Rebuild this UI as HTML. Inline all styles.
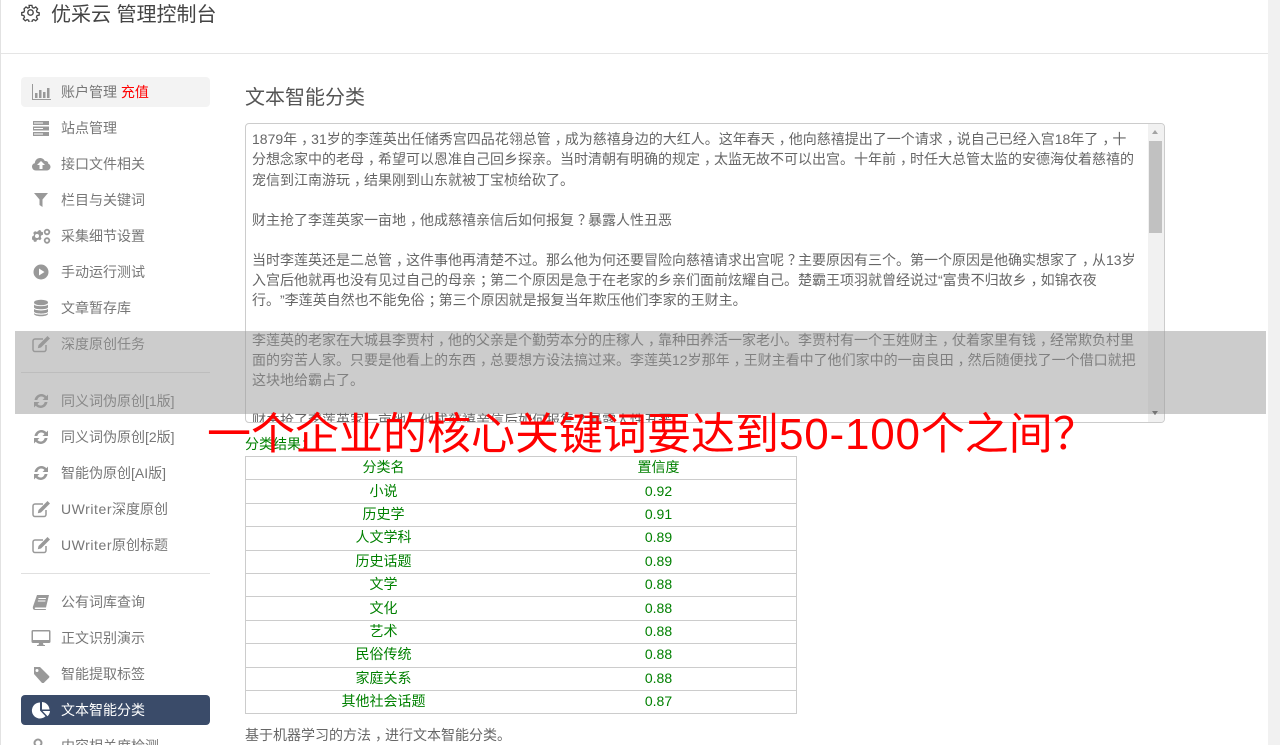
<!DOCTYPE html>
<html lang="zh"><head><meta charset="utf-8"><title>文本智能分类</title>
<style>
html,body{margin:0;padding:0;width:1280px;height:745px;overflow:hidden;background:#fff}
body{position:relative;font-family:"Liberation Sans","Noto Sans CJK SC",sans-serif;font-size:14px;color:#676a6c;text-spacing-trim:space-all}
.a{position:absolute;white-space:nowrap}
.item{position:absolute;left:21px;width:189px;height:30px;border-radius:4px;line-height:30px;color:#777}
.item span.t{position:absolute;left:40px;top:0;white-space:nowrap}
.item svg{position:absolute;left:10px;top:6px;width:20px;height:18px;fill:#999}
.hr{position:absolute;left:21px;width:189px;height:1px;background:#e0e0e0}
.ln{position:absolute;left:6px;white-space:nowrap;line-height:20px;color:#666}
.ln i,.p i{font-style:normal;position:relative;left:4px}
.l{letter-spacing:.55px}
td{border-top:1px solid #ccc;border-bottom:1px solid #ccc;padding:0 0 2px;text-align:center;color:green;height:20.4px;line-height:20px}
table{position:absolute;left:245px;top:456px;width:552px;border-collapse:collapse;table-layout:fixed;border-left:1px solid #ccc;border-right:1px solid #ccc}
</style></head><body>
<div class="a" style="left:0;top:0;width:1px;height:745px;background:#e2e2e2"></div>
<div class="a" style="left:1268px;top:0;width:12px;height:745px;background:#f1f1f1"></div>
<div class="a" style="left:1px;top:53px;width:1267px;height:1px;background:#e5e5e5"></div>
<svg class="a" style="left:21px;top:3px" width="19" height="19" viewBox="0 0 24 24" fill="none" stroke="#444" stroke-width="1.8"><circle cx="12" cy="12" r="3.4"/><path d="M10 2h4l.6 3 2.2.9 2.6-1.7 2.6 2.8-1.7 2.5.9 2.2 3 .6v3.4l-3 .6-.9 2.2 1.7 2.6-2.7 2.6-2.6-1.7-2.1.9-.6 3h-4l-.6-3-2.2-.9-2.5 1.7-2.8-2.7 1.7-2.5-.9-2.2-3-.6v-3.6l3-.6.9-2.2L2.9 7l2.8-2.8 2.5 1.7 2.2-.9z" transform="translate(1.2 1.2) scale(.9)"/></svg>
<div class="a" style="left:51px;top:1px;font-size:20px;line-height:28px;color:#444">优采云 管理控制台</div>

<div class="item" style="top:77px;background:#f3f3f3"><svg viewBox="0 0 20 18"><path d="M1 1h1v15h18v1H1z"/><path d="M4 10h2.500v5H4zM8 7h2.500v8H8zM12 9h2.500v6H12zM16 5h2.500v10H16z"/></svg><span class="t">账户管理 <span style="color:#f00">充值</span></span></div>
<div class="item" style="top:113px"><svg viewBox="0 0 20 18"><path d="M2 2h16v4H2zM2 7.500h16v4H2zM2 13h16v4H2z"/><path fill="#fff" d="M3 3.500h9v1H3zM3 9h9v1H3zM3 14.500h9v1H3z"/></svg><span class="t">站点管理</span></div>
<div class="item" style="top:149px"><svg viewBox="0 0 20 18"><path d="M5 15.500C2 15.500 1 13 1 11.500s1-3 2.800-3.300C4 5 6.500 3 9 3c2.300 0 4 1.300 4.800 3 2.800-.4 3.700 1.700 3.500 2.800 1.200.4 2.200 1.500 2.200 3 0 2-1.500 3.700-3.500 3.700z"/><path fill="#fff" d="M10 6l4 4h-2.500v4h-3v-4H6z"/></svg><span class="t">接口文件相关</span></div>
<div class="item" style="top:185px"><svg viewBox="0 0 20 18"><path d="M3 2h14l-5.500 6.500V16l-3-2V8.500z"/></svg><span class="t">栏目与关键词</span></div>
<div class="item" style="top:221px"><svg viewBox="0 0 20 18"><path fill-rule="evenodd" d="M7 4l1.500.3.800 1.500 1.700.5v2.500l-1.700.6-.6 1.500.8 1.700L8 14.300l-1.600-.8-1.500.6-.6 1.700H2l-.6-1.700L0 13.500l.1-3L1.400 10l.6-1.500-.8-1.600L3 5.100l1.600.8L6 5.300zM5 8a2 2 0 100 4 2 2 0 000-4z" transform="translate(1 -1)"/><circle cx="16" cy="5" r="2.300" fill="none" stroke="#999" stroke-width="1.800"/><circle cx="16" cy="13.500" r="2.300" fill="none" stroke="#999" stroke-width="1.800"/></svg><span class="t">采集细节设置</span></div>
<div class="item" style="top:257px"><svg viewBox="0 0 20 18"><path fill-rule="evenodd" d="M10 1.500a7.500 7.500 0 110 15 7.500 7.500 0 010-15zM8 5.500v7l5.500-3.500z"/></svg><span class="t">手动运行测试</span></div>
<div class="item" style="top:293px"><svg viewBox="0 0 20 18"><ellipse cx="10" cy="3.500" rx="7" ry="2.800"/><path d="M3 5.500c1 2.200 13 2.200 14 0v3c-1 2.400-13 2.400-14 0zM3 9.800c1 2.200 13 2.200 14 0v3c-1 2.400-13 2.400-14 0zM3 14c1 2.200 13 2.200 14 0v1c-1 3-13 3-14 0z"/></svg><span class="t">文章暂存库</span></div>
<div class="item" style="top:329px"><svg viewBox="0 0 20 18"><path fill="none" stroke="#999" stroke-width="1.500" d="M15 10v4.500a2 2 0 01-2 2H4a2 2 0 01-2-2V6a2 2 0 012-2h8"/><path d="M16.500 1L19 3.500 10 12.500l-3.200.7.700-3.200z"/></svg><span class="t">深度原创任务</span></div>
<div class="hr" style="top:372px"></div>
<div class="item" style="top:386px"><svg viewBox="0 0 20 18"><path d="M3.500 8C4 4.500 7 2 10.300 2c2 0 3.800.8 5 2.200L17 2.500V8h-5.500l2-2c-.8-1-2-1.500-3.200-1.500C8.500 4.500 7 5.800 6.300 8zM16.500 10c-.5 3.500-3.500 6-6.800 6-2 0-3.800-.8-5-2.200L3 15.500V10h5.500l-2 2c.8 1 2 1.500 3.200 1.500 1.800 0 3.300-1.300 4-3.500z"/></svg><span class="t">同义词伪原创[1版]</span></div>
<div class="item" style="top:422px"><svg viewBox="0 0 20 18"><path d="M3.500 8C4 4.500 7 2 10.300 2c2 0 3.800.8 5 2.200L17 2.500V8h-5.500l2-2c-.8-1-2-1.500-3.200-1.500C8.500 4.500 7 5.800 6.300 8zM16.500 10c-.5 3.500-3.500 6-6.800 6-2 0-3.800-.8-5-2.200L3 15.500V10h5.500l-2 2c.8 1 2 1.500 3.200 1.500 1.800 0 3.300-1.300 4-3.500z"/></svg><span class="t">同义词伪原创[2版]</span></div>
<div class="item" style="top:458px"><svg viewBox="0 0 20 18"><path d="M3.500 8C4 4.500 7 2 10.300 2c2 0 3.800.8 5 2.200L17 2.500V8h-5.500l2-2c-.8-1-2-1.500-3.200-1.500C8.500 4.500 7 5.800 6.300 8zM16.500 10c-.5 3.500-3.500 6-6.800 6-2 0-3.800-.8-5-2.200L3 15.500V10h5.500l-2 2c.8 1 2 1.500 3.200 1.500 1.800 0 3.300-1.300 4-3.500z"/></svg><span class="t">智能伪原创[AI版]</span></div>
<div class="item" style="top:494px"><svg viewBox="0 0 20 18"><path fill="none" stroke="#999" stroke-width="1.500" d="M15 10v4.500a2 2 0 01-2 2H4a2 2 0 01-2-2V6a2 2 0 012-2h8"/><path d="M16.500 1L19 3.500 10 12.500l-3.200.7.700-3.200z"/></svg><span class="t"><span class="l">UWriter</span>深度原创</span></div>
<div class="item" style="top:530px"><svg viewBox="0 0 20 18"><path fill="none" stroke="#999" stroke-width="1.500" d="M15 10v4.500a2 2 0 01-2 2H4a2 2 0 01-2-2V6a2 2 0 012-2h8"/><path d="M16.500 1L19 3.500 10 12.500l-3.200.7.700-3.200z"/></svg><span class="t"><span class="l">UWriter</span>原创标题</span></div>
<div class="hr" style="top:573px"></div>
<div class="item" style="top:587px"><svg viewBox="0 0 20 18"><path d="M6 2h12l-3 12.500H4.500c-1 0-1 1.500 0 1.500H15l-.3 1H4c-2 0-2.500-2-2-3.500z"/><path fill="#fff" d="M7.500 5h7.500l-.2 1H7.300zM7 7.500h7.500l-.2 1H6.800z"/></svg><span class="t">公有词库查询</span></div>
<div class="item" style="top:623px"><svg viewBox="0 0 20 18"><path fill-rule="evenodd" d="M2 1h16a1.500 1.500 0 011.500 1.500v10A1.500 1.500 0 0118 14H2a1.500 1.500 0 01-1.500-1.500v-10A1.500 1.500 0 012 1zm0 1.500v8.500h16V2.500z"/><path d="M8 14h4l.5 2H14v1H6v-1h1.500z"/></svg><span class="t">正文识别演示</span></div>
<div class="item" style="top:659px"><svg viewBox="0 0 20 18"><path fill-rule="evenodd" d="M3 2h6l9 9a1.200 1.200 0 010 1.700L12.700 18a1.200 1.200 0 01-1.700 0L3 9zm3 2a1.500 1.500 0 100 3 1.500 1.500 0 000-3z"/></svg><span class="t">智能提取标签</span></div>
<div class="item" style="top:695px;background:#3a4b69;color:#fff"><svg viewBox="0 0 20 18"><path fill="#fff" d="M9 1.500V9.500l5.500 5.700A8 8 0 119 1.500zM11 1a8 8 0 017.500 7.500H11zM11.500 10H19a8 8 0 01-2.500 5.300z"/></svg><span class="t">文本智能分类</span></div>
<div class="item" style="top:731px"><svg viewBox="0 0 20 18"><circle cx="7" cy="6" r="3.500" fill="none" stroke="#999" stroke-width="2"/><path d="M10 9l7 7-1.500 1.500-7-7z"/></svg><span class="t">内容相关度检测</span></div>

<div class="a" style="left:245px;top:83px;font-size:20px;line-height:30px;color:#555">文本智能分类</div>

<div class="a" style="left:245px;top:123px;width:918px;height:298px;border:1px solid #ccc;border-radius:4px;overflow:hidden;background:#fff">
<div class="ln" style="top:5px">1879年<i>，</i>31岁的李莲英出任储秀宫四品花翎总管<i>，</i>成为慈禧身边的大红人。这年春天<i>，</i>他向慈禧提出了一个请求<i>，</i>说自己已经入宫18年了<i>，</i>十</div>
<div class="ln" style="top:25px">分想念家中的老母<i>，</i>希望可以恩准自己回乡探亲。当时清朝有明确的规定<i>，</i>太监无故不可以出宫。十年前<i>，</i>时任大总管太监的安德海仗着慈禧的</div>
<div class="ln" style="top:46px">宠信到江南游玩<i>，</i>结果刚到山东就被丁宝桢给砍了。</div>
<div class="ln" style="top:86px">财主抢了李莲英家一亩地<i>，</i>他成慈禧亲信后如何报复<i>？</i>暴露人性丑恶</div>
<div class="ln" style="top:126px">当时李莲英还是二总管<i>，</i>这件事他再清楚不过。那么他为何还要冒险向慈禧请求出宫呢<i>？</i>主要原因有三个。第一个原因是他确实想家了<i>，</i>从13岁</div>
<div class="ln" style="top:146px">入宫后他就再也没有见过自己的母亲<i>；</i>第二个原因是急于在老家的乡亲们面前炫耀自己。楚霸王项羽就曾经说过“富贵不归故乡<i>，</i>如锦衣夜</div>
<div class="ln" style="top:166px">行。”李莲英自然也不能免俗<i>；</i>第三个原因就是报复当年欺压他们李家的王财主。</div>
<div class="ln" style="top:206px">李莲英的老家在大城县李贾村<i>，</i>他的父亲是个勤劳本分的庄稼人<i>，</i>靠种田养活一家老小。李贾村有一个王姓财主<i>，</i>仗着家里有钱<i>，</i>经常欺负村里</div>
<div class="ln" style="top:226px">面的穷苦人家。只要是他看上的东西<i>，</i>总要想方设法搞过来。李莲英12岁那年<i>，</i>王财主看中了他们家中的一亩良田<i>，</i>然后随便找了一个借口就把</div>
<div class="ln" style="top:246px">这块地给霸占了。</div>
<div class="ln" style="top:286px">财主抢了李莲英家一亩地<i>，</i>他成慈禧亲信后如何报复<i>？</i>暴露人性丑恶</div>
<div class="a" style="left:902px;top:0;width:16px;height:298px;background:#f1f1f1"></div>
<div class="a" style="left:903px;top:17px;width:13px;height:92px;background:#c1c1c1"></div>
<div class="a" style="left:906px;top:6px;width:0;height:0;border-left:3.500px solid transparent;border-right:3.500px solid transparent;border-bottom:4px solid #a3a3a3"></div>
<div class="a" style="left:906px;top:287px;width:0;height:0;border-left:3.500px solid transparent;border-right:3.500px solid transparent;border-top:4px solid #505050"></div>
</div>

<div class="a" style="left:245px;top:434px;line-height:20px;color:green">分类结果：</div>
<table>
<tr><td>分类名</td><td>置信度</td></tr>
<tr><td>小说</td><td>0.92</td></tr>
<tr><td>历史学</td><td>0.91</td></tr>
<tr><td>人文学科</td><td>0.89</td></tr>
<tr><td>历史话题</td><td>0.89</td></tr>
<tr><td>文学</td><td>0.88</td></tr>
<tr><td>文化</td><td>0.88</td></tr>
<tr><td>艺术</td><td>0.88</td></tr>
<tr><td>民俗传统</td><td>0.88</td></tr>
<tr><td>家庭关系</td><td>0.88</td></tr>
<tr><td>其他社会话题</td><td>0.87</td></tr>
</table>
<div class="a p" style="left:245px;top:725px;line-height:20px;color:#666">基于机器学习的方法<i>，</i>进行文本智能分类。</div>

<div class="a" style="left:15px;top:331px;width:1251px;height:83px;background:rgba(153,153,153,.5)"></div>
<div class="a" style="left:207px;top:404px;font-size:44px;line-height:62px;color:#f00">一个企业的核心关键词要达到<span style="letter-spacing:.8px">50-100</span>个之间<span style="font-family:'Liberation Sans','Noto Sans CJK TC',sans-serif">？</span></div>
</body></html>
